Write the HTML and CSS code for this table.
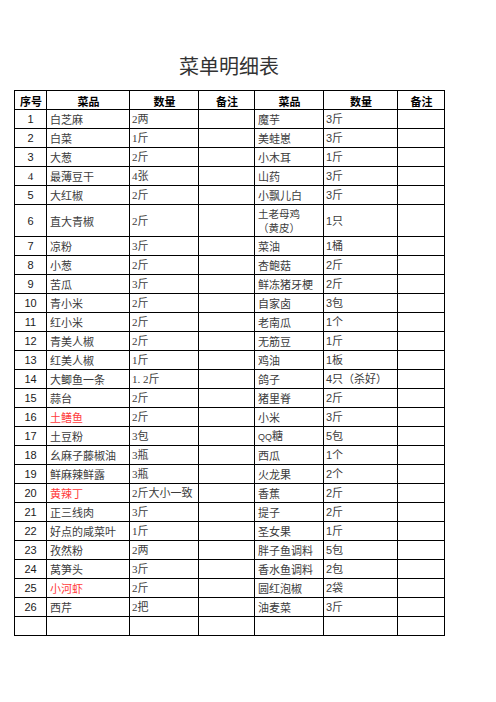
FILE: index.html
```html
<!DOCTYPE html>
<html lang="zh-CN">
<head>
<meta charset="utf-8">
<title>菜单明细表</title>
<link rel="stylesheet" href="styles.css">
</head>
<body>
<div class="page">
  <h1 class="title">菜单明细表</h1>
  <table class="menu">
    <colgroup>
      <col class="c-no"><col class="c-name"><col class="c-qty"><col class="c-note">
      <col class="c-name2"><col class="c-qty2"><col class="c-note2">
    </colgroup>
    <thead>
      <tr><th>序号</th><th>菜品</th><th>数量</th><th>备注</th><th>菜品</th><th>数量</th><th>备注</th></tr>
    </thead>
    <tbody>
      <tr><td class="no">1</td><td>白芝麻</td><td class="qs">2两</td><td></td><td>魔芋</td><td class="q">3斤</td><td></td></tr>
      <tr><td class="no">2</td><td>白菜</td><td class="qs">1斤</td><td></td><td>美蛙崽</td><td class="q">3斤</td><td></td></tr>
      <tr><td class="no">3</td><td>大葱</td><td class="qs">2斤</td><td></td><td>小木耳</td><td class="q">1斤</td><td></td></tr>
      <tr><td class="no serif">4</td><td>最薄豆干</td><td class="qs">4张</td><td></td><td>山药</td><td class="q">3斤</td><td></td></tr>
      <tr><td class="no">5</td><td>大红椒</td><td class="qs">2斤</td><td></td><td>小飘儿白</td><td class="q">3斤</td><td></td></tr>
      <tr class="tall"><td class="no">6</td><td>直大青椒</td><td class="qs">2斤</td><td></td><td class="wrap"><span class="line">土老母鸡</span><span class="line">（黄皮）</span></td><td class="q">1只</td><td></td></tr>
      <tr><td class="no">7</td><td>凉粉</td><td class="qs">3斤</td><td></td><td>菜油</td><td class="q">1桶</td><td></td></tr>
      <tr><td class="no">8</td><td>小葱</td><td class="qs">2斤</td><td></td><td>杏鲍菇</td><td class="q">2斤</td><td></td></tr>
      <tr><td class="no">9</td><td>苦瓜</td><td class="qs">3斤</td><td></td><td>鲜冻猪牙梗</td><td class="q">2斤</td><td></td></tr>
      <tr><td class="no">10</td><td>青小米</td><td class="qs">2斤</td><td></td><td>自家卤</td><td class="q">3包</td><td></td></tr>
      <tr><td class="no">11</td><td>红小米</td><td class="qs">2斤</td><td></td><td>老南瓜</td><td class="q">1个</td><td></td></tr>
      <tr><td class="no">12</td><td>青美人椒</td><td class="qs">2斤</td><td></td><td>无筋豆</td><td class="q">1斤</td><td></td></tr>
      <tr><td class="no">13</td><td>红美人椒</td><td class="qs">1斤</td><td></td><td>鸡油</td><td class="q">1板</td><td></td></tr>
      <tr><td class="no">14</td><td>大鲫鱼一条</td><td class="qs">1. 2斤</td><td></td><td>鸽子</td><td class="q">4只（杀好）</td><td></td></tr>
      <tr><td class="no">15</td><td>蒜台</td><td class="qs">2斤</td><td></td><td>猪里脊</td><td class="q">2斤</td><td></td></tr>
      <tr><td class="no">16</td><td class="red">土鳝鱼</td><td class="qs">2斤</td><td></td><td>小米</td><td class="q">3斤</td><td></td></tr>
      <tr><td class="no">17</td><td>土豆粉</td><td class="qs">3包</td><td></td><td><span class="latin">QQ</span>糖</td><td class="q">5包</td><td></td></tr>
      <tr><td class="no">18</td><td>幺麻子藤椒油</td><td class="qs">3瓶</td><td></td><td>西瓜</td><td class="q">1个</td><td></td></tr>
      <tr><td class="no">19</td><td>鲜麻辣鲜露</td><td class="qs">3瓶</td><td></td><td>火龙果</td><td class="q">2个</td><td></td></tr>
      <tr><td class="no">20</td><td class="red">黄辣丁</td><td class="qs">2斤大小一致</td><td></td><td>香蕉</td><td class="q">2斤</td><td></td></tr>
      <tr><td class="no">21</td><td>正三线肉</td><td class="qs">3斤</td><td></td><td>提子</td><td class="q">2斤</td><td></td></tr>
      <tr><td class="no">22</td><td>好点的咸菜叶</td><td class="qs">1斤</td><td></td><td>圣女果</td><td class="q">1斤</td><td></td></tr>
      <tr><td class="no">23</td><td>孜然粉</td><td class="qs">2两</td><td></td><td>胖子鱼调料</td><td class="q">5包</td><td></td></tr>
      <tr><td class="no">24</td><td>莴笋头</td><td class="qs">3斤</td><td></td><td>香水鱼调料</td><td class="q">2包</td><td></td></tr>
      <tr><td class="no">25</td><td class="red">小河虾</td><td class="qs">2斤</td><td></td><td>圆红泡椒</td><td class="q">2袋</td><td></td></tr>
      <tr><td class="no">26</td><td>西芹</td><td class="qs">2把</td><td></td><td>油麦菜</td><td class="q">3斤</td><td></td></tr>
      <tr><td class="no"></td><td></td><td></td><td></td><td></td><td></td><td></td></tr>
    </tbody>
  </table>
</div>
</body>
</html>
```

FILE: styles.css
```css
html, body {
  margin: 0;
  padding: 0;
  background: #ffffff;
}

body {
  font-family: "Noto Sans CJK SC", "Liberation Sans", sans-serif;
  color: #3c3c3c;
}

.page {
  padding: 54px 0 0 14px;
  width: 430px;
}

.title {
  margin: 0;
  font-size: 20px;
  line-height: 24px;
  font-weight: normal;
  text-align: center;
  color: #333333;
  height: 36px;
}

.menu {
  border-collapse: collapse;
  table-layout: fixed;
  width: 430px;
  font-size: 11px;
}

.c-no { width: 32px; }
.c-name { width: 83px; }
.c-qty { width: 69px; }
.c-note { width: 56px; }
.c-name2 { width: 69px; }
.c-qty2 { width: 74px; }
.c-note2 { width: 47px; }

.menu th,
.menu td {
  border: 1px solid #000000;
  height: 19px;
  padding: 0 2px 0 3px;
  box-sizing: border-box;
  white-space: nowrap;
  overflow: hidden;
  line-height: 14px;
  vertical-align: middle;
  text-align: left;
}

.menu th {
  font-weight: bold;
  color: #000000;
  text-align: center;
  font-size: 11px;
  padding-top: 2px;
}

.menu td.no {
  text-align: center;
  font-family: "Liberation Sans", sans-serif;
  color: #1a1a1a;
  padding: 0;
}

.menu td.no.serif {
  font-family: "Liberation Serif", serif;
}

.menu td.qs {
  font-family: "Liberation Serif", "Noto Sans CJK SC", serif;
  padding-left: 2px;
}

.menu td.q {
  font-family: "Liberation Sans", "Noto Sans CJK SC", sans-serif;
  padding-left: 2px;
}

.menu tr.tall td {
  height: 32px;
}

.menu td.wrap {
  white-space: normal;
}

.line {
  display: block;
  line-height: 14px;
  height: 14px;
  font-size: 10.5px;
}

.menu td.red {
  color: #ff3c3c;
}

.latin {
  font-family: "Liberation Sans", sans-serif;
  font-size: 9px;
}
```
